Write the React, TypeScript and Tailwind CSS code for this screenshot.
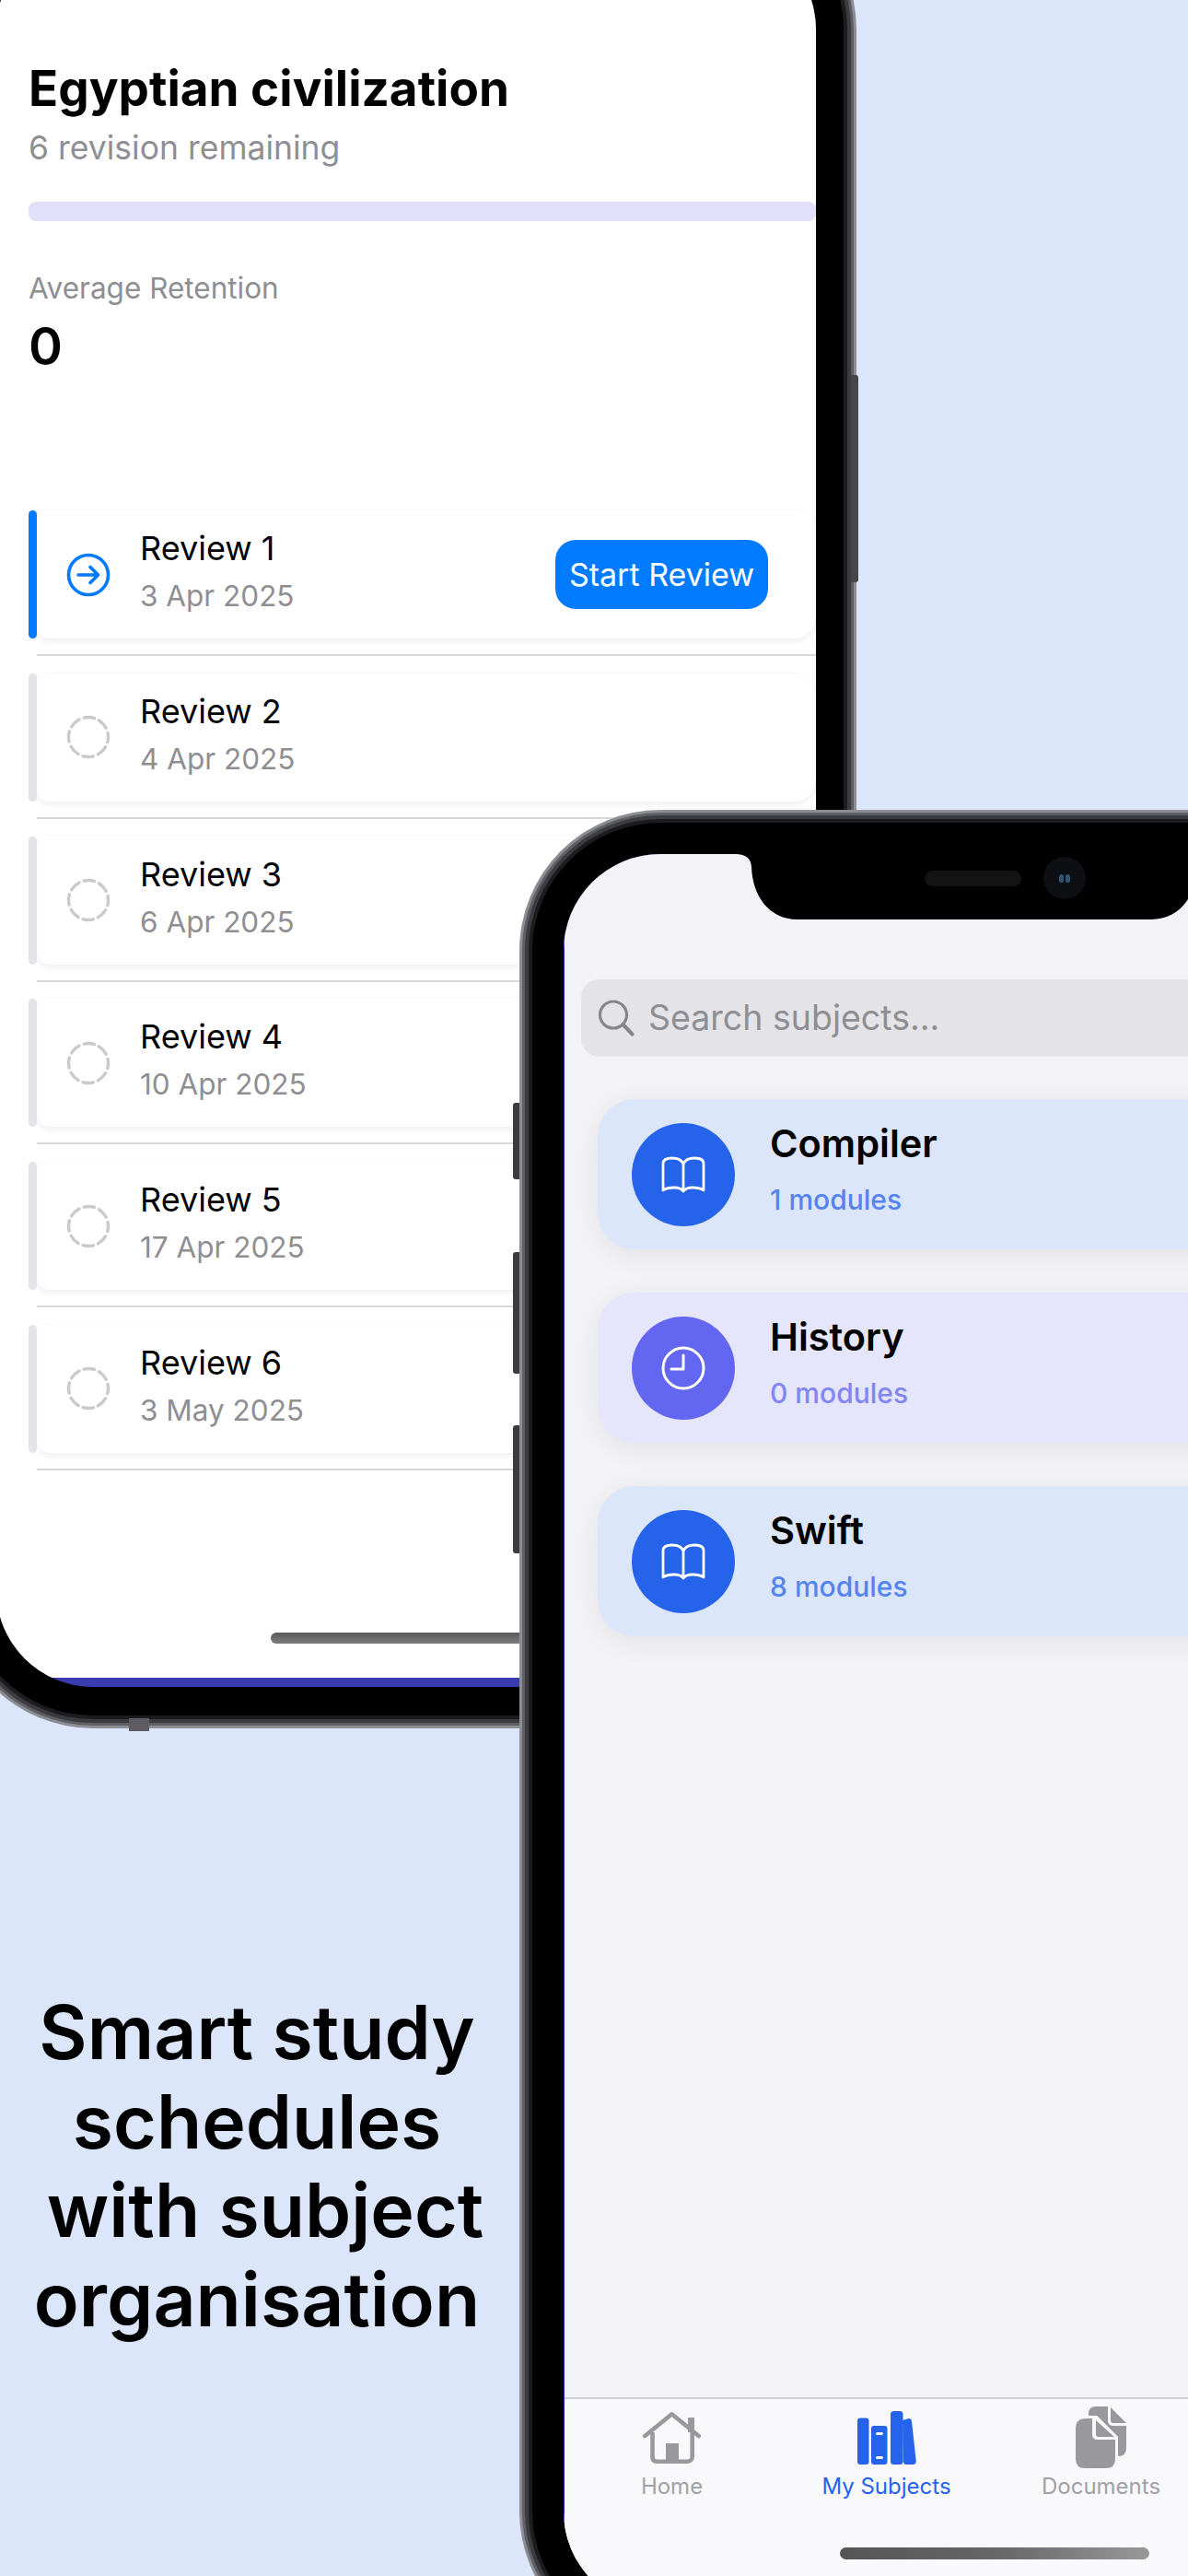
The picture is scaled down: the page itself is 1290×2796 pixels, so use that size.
const SANS = "font-['Inter','Noto_Sans',sans-serif]";

const reviews = [
  { name: "Review 1", date: "3 Apr 2025", active: true },
  { name: "Review 2", date: "4 Apr 2025" },
  { name: "Review 3", date: "6 Apr 2025" },
  { name: "Review 4", date: "10 Apr 2025" },
  { name: "Review 5", date: "17 Apr 2025" },
  { name: "Review 6", date: "3 May 2025" },
];

const subjects = [
  { name: "Compiler", modules: "1 modules", icon: "book", card: "bg-[#dce6fb]", dot: "bg-[#2563eb]", sub: "text-[#5583ef]" },
  { name: "History", modules: "0 modules", icon: "clock", card: "bg-[#e5e5fb]", dot: "bg-[#6366f1]", sub: "text-[#8285f4]" },
  { name: "Swift", modules: "8 modules", icon: "book", card: "bg-[#dce6fb]", dot: "bg-[#2563eb]", sub: "text-[#5583ef]" },
];

function BookIcon() {
  return (
    <svg width="48" height="40" viewBox="0 0 48 40" fill="none" stroke="white" strokeWidth="2.8" strokeLinecap="round" strokeLinejoin="round">
      <path d="M2 37V8C2 4 6 2 12 2C18 2 22 4 24 8C26 4 30 2 36 2C42 2 46 4 46 8V37C42 34 38 34 34 34C30 34 26 35 24 38C22 35 18 34 14 34C10 34 6 34 2 37Z" />
      <path d="M24 8V37" />
    </svg>
  );
}

function ClockIcon() {
  return (
    <svg width="48" height="48" viewBox="0 0 48 48" fill="none" stroke="white" strokeWidth="3" strokeLinecap="round" strokeLinejoin="round">
      <circle cx="24" cy="24" r="22" />
      <path d="M24 10V25H11" />
    </svg>
  );
}

function ArrowCircle() {
  return (
    <svg width="48" height="48" viewBox="0 0 48 48" fill="none" stroke="#007aff" strokeWidth="3.6" strokeLinecap="round" strokeLinejoin="round">
      <circle cx="24" cy="24" r="21.5" />
      <path d="M13 24H34M26 15.5L34.5 24L26 32.5" />
    </svg>
  );
}

function DashedCircle() {
  return (
    <svg width="48" height="48" viewBox="0 0 48 48" fill="none" stroke="#c9c9ce" strokeWidth="3.4">
      <circle cx="24" cy="24" r="21.5" strokeDasharray="11.5 5.4" strokeDashoffset="5.7" strokeLinecap="round" />
    </svg>
  );
}

function SearchIcon() {
  return (
    <svg width="40" height="40" viewBox="0 0 40 40" fill="none" stroke="#85858a" strokeWidth="3.2" strokeLinecap="round">
      <circle cx="17" cy="16.5" r="14.5" />
      <path d="M27.5 27L37.5 37.5" strokeWidth="4" />
    </svg>
  );
}

function HomeIcon() {
  return (
    <svg width="63" height="56" viewBox="0 0 63 56" fill="none">
      <path d="M10.5 22V49C10.5 52 12 53.7 15 53.7H48C51 53.7 53.7 52 53.7 49V22" stroke="#98989d" strokeWidth="4.6" />
      <path d="M2.3 26L31.5 2.3L60.7 26" stroke="#98989d" strokeWidth="4.6" strokeLinecap="round" strokeLinejoin="round" />
      <path d="M49 7C49 6 50 6 50.5 6H55C55.5 6 56 6.5 56 7V22H49Z" fill="#98989d" />
      <path d="M25 34H39V54H25Z" fill="#98989d" />
    </svg>
  );
}

function BooksIcon() {
  return (
    <svg width="64" height="58" viewBox="0 0 64 58" fill="#2563eb">
      <rect x="0" y="7.5" width="12.5" height="50.5" rx="3" />
      <rect x="15" y="16" width="17.5" height="42" rx="3" />
      <rect x="36" y="0" width="13.5" height="58" rx="3.5" />
      <path d="M49 10L56 8Q58.5 8 59 11L63.7 54Q64 58 60 58H53Q50 58 49.7 54Z" />
      <rect x="20" y="23" width="8" height="3" rx="1.5" fill="#f9f9fb" />
      <rect x="20" y="49" width="8" height="3" rx="1.5" fill="#f9f9fb" />
    </svg>
  );
}

function DocsIcon() {
  return (
    <svg width="56" height="68" viewBox="0 0 56 68" fill="#98989d">
      <path d="M14 8Q14 0 22 0H35V15Q35 21 41 21H55V45Q55 54 46 54H20Z" />
      <path d="M38 1L55 18H41Q38 18 38 15Z" />
      <path d="M0 24Q0 13 11 13H22L43 34V57Q43 67 33 67H10Q0 67 0 57Z" fill="#f9f9fb" stroke="#f9f9fb" strokeWidth="6" />
      <path d="M0 24Q0 13 11 13H18V30Q18 36 24 36H43V57Q43 67 33 67H10Q0 67 0 57Z" />
      <path d="M22 15L42 33H25Q22 33 22 30Z" />
    </svg>
  );
}

function Phone({ frame, children }: { frame: string; children: React.ReactNode }) {
  return (
    <div className={`absolute rounded-[139px] bg-black shadow-[0_0_0_4px_#1c1c1e,0_0_0_8px_#3b3b40,0_0_0_11px_#5e5e65,0_0_0_14px_#8d8d94] ${frame}`}>
      <div className="h-[1904px] w-[890px] overflow-hidden rounded-[105px] bg-[#3b3bb0]">{children}</div>
    </div>
  );
}

function ReviewRow({ name, date, active }: { name: string; date: string; active?: boolean }) {
  return (
    <div className="mb-[18.8px]">
      <div className="relative ml-[9px] flex h-[139px] items-center rounded-l-[14px] rounded-r-[24px] bg-white pl-[32px] pr-[52px] shadow-[0_3px_8px_rgba(0,0,0,0.07)]">
        <span className={`absolute bottom-0 left-[-9px] top-0 w-[9px] rounded-[5px] ${active ? "bg-[#007aff]" : "bg-[#e3e3e8]"}`} />
        {active ? <ArrowCircle /> : <DashedCircle />}
        <div className="ml-[32px] flex-1 pb-[5px]">
          <div className="text-[36px] leading-[50px] text-black">{name}</div>
          <div className="mt-[2px] text-[31.5px] leading-[50px] text-[#8e8e93]">{date}</div>
        </div>
        {active && (
          <button className="flex h-[75px] w-[231px] items-center justify-center rounded-[22px] bg-[#007aff] text-[34px] text-white">
            Start Review
          </button>
        )}
      </div>
      <div className="ml-[9px] mt-[17px] h-[2px] bg-[#d8d8dc]" />
    </div>
  );
}

function SubjectCard({ name, modules, icon, card, dot, sub }: (typeof subjects)[number]) {
  return (
    <div className={`flex h-[163px] w-[900px] items-center rounded-[40px] pl-[37px] shadow-[0_6px_30px_rgba(0,0,0,0.07)] ${card}`}>
      <div className={`flex h-[112px] w-[112px] items-center justify-center rounded-full ${dot}`}>
        {icon === "book" ? <BookIcon /> : <ClockIcon />}
      </div>
      <div className="ml-[38px] self-start pt-[19px]">
        <div className="text-[41.5px] font-semibold leading-[58px] text-black">{name}</div>
        <div className={`mt-[10px] text-[30px] font-medium leading-[44px] ${sub}`}>{modules}</div>
      </div>
    </div>
  );
}

function TabItem({ label, icon, color }: { label: string; icon: React.ReactNode; color: string }) {
  return (
    <div className="flex flex-col items-center">
      <div className="flex h-[68px] items-center">{icon}</div>
      <div className={`mt-[4px] whitespace-nowrap text-[24px] leading-[30px] ${color}`}>{label}</div>
    </div>
  );
}

export default function App() {
  return (
    <div className={`relative h-[2796px] w-[1290px] overflow-hidden bg-[#dce6fb] ${SANS}`}>
      {/* top phone, cropped by the page */}
      <Phone frame="left-[-38px] top-[-107px] h-[1969px] w-[954px] pb-[31px] pl-[34px] pr-[30px] pt-[34px]">
        <div className="h-[1894px] bg-white pl-[35px] pt-[136px]">
          <h1 className="text-[53px] font-bold leading-[66px] text-black">Egyptian civilization</h1>
          <p className="mt-[9px] text-[35.5px] leading-[46px] text-[#8e8e93]">6 revision remaining</p>
          <div className="mt-[35px] h-[21px] rounded-[8px] bg-[#e0e0fa]" />
          <p className="mt-[51px] text-[31.5px] leading-[44px] text-[#8e8e93]">Average Retention</p>
          <p className="mt-[11px] text-[56px] font-semibold leading-[60px] text-black">0</p>
          <div className="mt-[148px]">
            {reviews.map((r) => (
              <ReviewRow key={r.name} {...r} />
            ))}
          </div>
          <div className="ml-[263px] mt-[176px] h-[12px] w-[500px] rounded-full bg-gradient-to-b from-[#5a5a5a] to-[#7d7d7d]" />
        </div>
      </Phone>
      <span className="absolute left-[924px] top-[407px] h-[225px] w-[8px] rounded-r-[3px] bg-[#45454a]" />
      <span className="absolute left-[140px] top-[1865px] h-[14px] w-[22px] bg-[#5c5c62]" />

      {/* caption */}
      <div className="relative w-[558px] pt-[2158px] text-center text-[80.5px] font-semibold leading-[96.5px] text-black">
        <div>Smart study</div>
        <div>schedules</div>
        <div className="pl-[18px]">with subject</div>
        <div>organisation</div>
      </div>

      {/* front phone, runs off the right and bottom */}
      <div className="absolute left-[557px] top-[1197px] flex w-[8px] flex-col">
        <span className="h-[83px] rounded-l-[3px] bg-[#3a3a40]" />
        <span className="mt-[79px] h-[132px] rounded-l-[3px] bg-[#3a3a40]" />
        <span className="mt-[56px] h-[139px] rounded-l-[3px] bg-[#3a3a40]" />
      </div>
      <Phone frame="left-[578px] top-[893px] h-[1972px] w-[958px] p-[34px]">
        <div className="relative flex h-[1904px] flex-col border-l border-[#2a2ad0] bg-[#f2f2f7]">
          {/* notch */}
          <svg className="absolute left-0 top-0" width="890" height="72" viewBox="0 0 890 72" fill="black">
            <path d="M186 0Q202 0 203 14C204 45 222 71 253 71H637C668 71 686 45 687 14Q688 0 704 0Z" />
          </svg>
          <div className="absolute left-[391px] top-[18px] h-[17px] w-[105px] rounded-full bg-[#131313]" />
          <div className="absolute left-[520px] top-[3px] flex h-[46px] w-[46px] items-center justify-center gap-[2px] rounded-full bg-[#0d0f12]">
            <span className="h-[9px] w-[5px] rounded-full bg-[#2f5576]" />
            <span className="h-[9px] w-[5px] rounded-full bg-[#2f5576]" />
          </div>

          <div className="flex flex-1 flex-col pl-[18px] pt-[136px]">
            <div className="flex h-[84px] w-[900px] items-center rounded-[20px] bg-[#e3e3e8] pl-[18px]">
              <SearchIcon />
              <span className="ml-[15px] text-[37.5px] text-[#8e8e93]">Search subjects...</span>
            </div>
            <div className="ml-[18px] mt-[46px] flex flex-col gap-[47px]">
              {subjects.map((s) => (
                <SubjectCard key={s.name} {...s} />
              ))}
            </div>
          </div>

          {/* tab bar */}
          <div className="h-[229px] border-t-2 border-[#cfcfd4] bg-[#f9f9fb] pt-[8px]">
            <div className="grid w-[699px] grid-cols-3">
              <TabItem label="Home" icon={<HomeIcon />} color="text-[#a1a1a6]" />
              <TabItem label="My Subjects" icon={<BooksIcon />} color="text-[#2563eb]" />
              <TabItem label="Documents" icon={<DocsIcon />} color="text-[#a1a1a6]" />
            </div>
            <div className="ml-[299px] mt-[51px] h-[13px] w-[336px] rounded-full bg-gradient-to-r from-[#555] via-[#666] to-[#999]" />
          </div>
        </div>
      </Phone>
    </div>
  );
}
